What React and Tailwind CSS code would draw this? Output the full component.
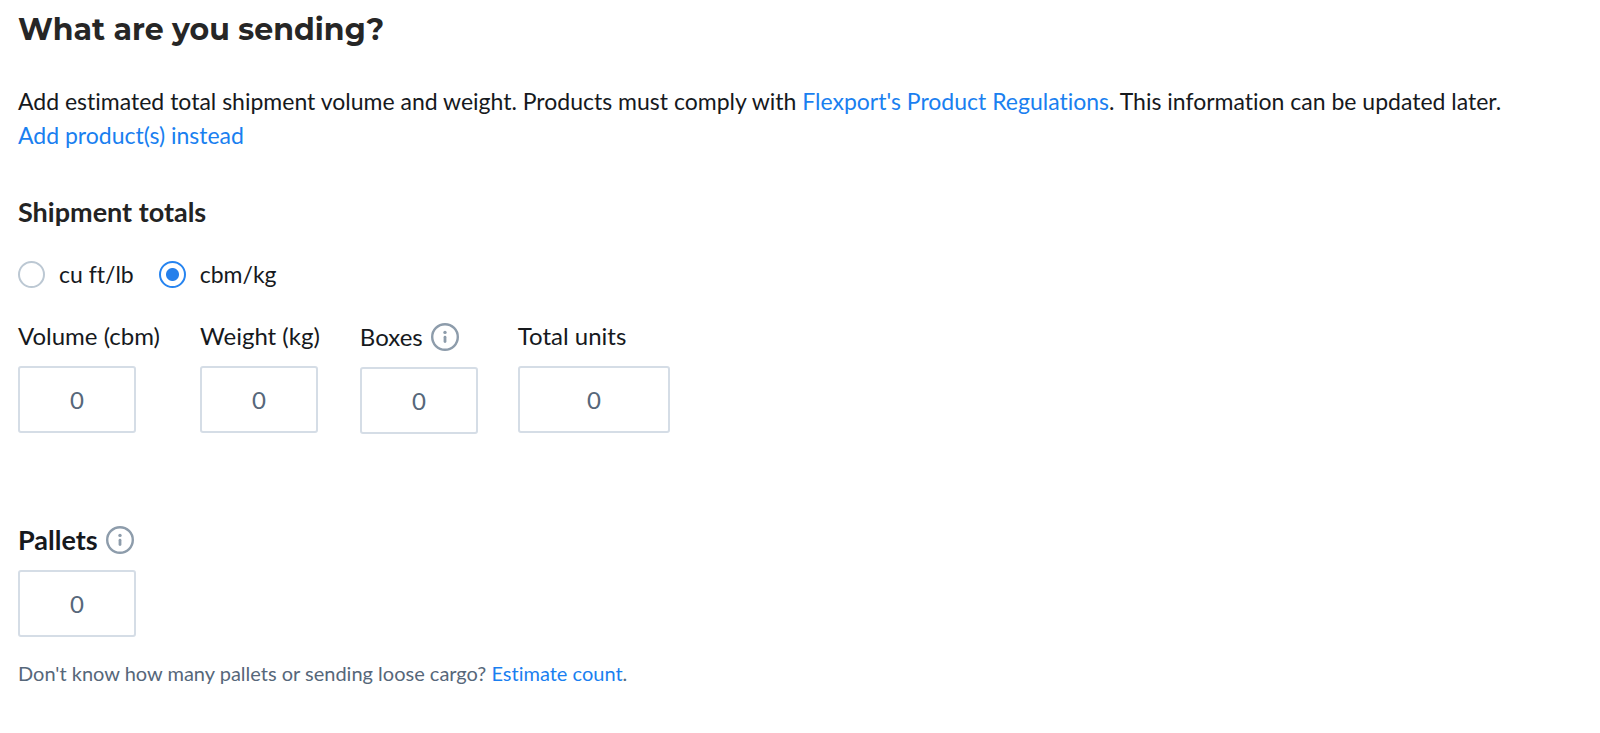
function InfoIcon() {
  return (
    <svg viewBox="0 0 28 28" className="size-7 shrink-0" fill="none" aria-hidden="true">
      <circle cx="14" cy="14" r="12.8" stroke="#8d9cab" strokeWidth="2.4" />
      <circle cx="14" cy="9.4" r="1.7" fill="#8d9cab" />
      <path d="M14 14.2V18.6" stroke="#8d9cab" strokeWidth="2.8" strokeLinecap="round" />
    </svg>
  );
}

const inputClass =
  "h-[67px] rounded-[3px] border-2 border-[#d5dde6] bg-white text-center text-2xl text-[#56677a] outline-none";

function Unit({ id, label, defaultChecked }) {
  return (
    <label htmlFor={id} className="flex items-center gap-[14px]">
      <input
        id={id}
        type="radio"
        name="units"
        defaultChecked={defaultChecked}
        className="size-[27px] appearance-none rounded-full border-2 border-[#bcc8d3] bg-white checked:border-[#2684f0] checked:bg-[radial-gradient(circle,#2680eb_6px,white_7px)]"
      />
      <span>{label}</span>
    </label>
  );
}

function Field({ id, label, width = "w-[118px]", info }) {
  return (
    <div className="flex flex-col items-start gap-[14px]">
      <label htmlFor={id} className={`flex items-center gap-2 ${info ? "h-[33px]" : "h-8"}`}>
        {label}
        {info && <InfoIcon />}
      </label>
      <input id={id} type="text" defaultValue="0" className={`${inputClass} ${width}`} />
    </div>
  );
}

export default function App() {
  return (
    <main className="bg-white px-[18px] pt-[10px] pb-10 font-['Lato',sans-serif] text-2xl text-[#16191d] [font-variant-ligatures:none]">
      <h1 className="font-['Montserrat','Inter',sans-serif] text-[30px] leading-10 font-bold text-[#262626]">
        What are you sending?
      </h1>
      <p className="mt-[34px] text-[23px] leading-[34px]">
        Add estimated total shipment volume and weight. Products must comply with{" "}
        <a href="#regulations" className="text-[#1a7ff0]">Flexport's Product Regulations</a>. This
        information can be updated later.
        <br />
        <a href="#products" className="text-[#1a7ff0]">Add product(s) instead</a>
      </p>
      <fieldset className="mt-11">
        <legend className="text-[27px] leading-8 font-bold text-[#232323]">Shipment totals</legend>
        <div className="mt-[30px] flex gap-[25px] text-[23px] leading-8">
          <Unit id="imperial" label="cu ft/lb" />
          <Unit id="metric" label="cbm/kg" defaultChecked />
        </div>
        <div className="mt-[30px] flex gap-10">
          <Field id="volume" label="Volume (cbm)" />
          <Field id="weight" label="Weight (kg)" />
          <Field id="boxes" label="Boxes" info />
          <Field id="total" label="Total units" width="w-[152px]" />
        </div>
      </fieldset>
      <section className="mt-[90px] flex flex-col items-start">
        <label htmlFor="pallets" className="flex h-8 items-center gap-2 text-[27px] font-bold">
          Pallets
          <InfoIcon />
        </label>
        <input id="pallets" type="text" defaultValue="0" className={`mt-[14px] w-[118px] ${inputClass}`} />
        <p className="mt-[22px] text-xl leading-7 text-[#56677a]">
          Don't know how many pallets or sending loose cargo?{" "}
          <a href="#estimate" className="text-[#1a7ff0]">Estimate count</a>.
        </p>
      </section>
    </main>
  );
}
